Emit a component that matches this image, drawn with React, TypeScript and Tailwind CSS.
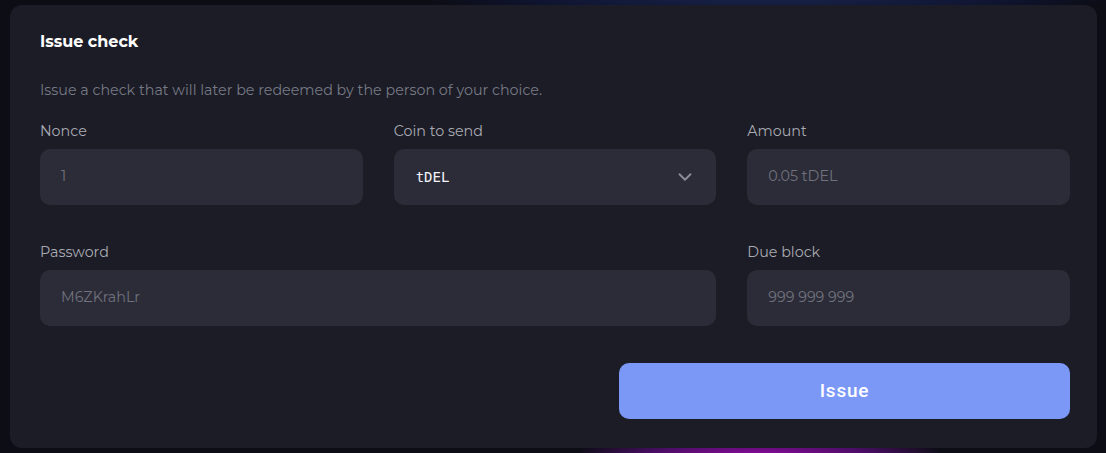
import { ChevronDown } from "lucide-react";

function Field({
  label,
  value,
  className = "",
}: {
  label: string;
  value: string;
  className?: string;
}) {
  return (
    <div className={`flex flex-col gap-[8px] ${className}`}>
      <label className="text-[14.3px] leading-[19px] text-[#a9abb3]">{label}</label>
      <div className="flex h-[56px] items-center rounded-[10px] bg-[#2c2c38] px-[21px] text-[14.3px] text-[#70727d]">
        {value}
      </div>
    </div>
  );
}

export default function App() {
  return (
    <main
      className="relative min-h-screen w-full overflow-hidden bg-[#0c0d15] pb-[5px] pl-[10px] pr-[9px] pt-[5px]"
      style={{ fontFamily: "Montserrat, 'Open Sans', 'Noto Sans', sans-serif" }}
    >
      {/* background glows */}
      <div className="absolute left-[430px] top-[-60px] h-[90px] w-[680px] rounded-full bg-[radial-gradient(ellipse_at_center,#1c2a55_0%,#0f1430_55%,transparent_75%)]" />
      <div className="absolute bottom-[-30px] left-[580px] h-[50px] w-[360px] rounded-full bg-[radial-gradient(ellipse_at_center,#9a0aa8_0%,#4a0d65_45%,transparent_75%)]" />

      <section className="relative flex flex-col rounded-[12px] bg-[#1c1c26] pb-[29px] pl-[30px] pr-[27px] pt-[27px]">
        <h1 className="text-[16px] font-bold leading-[20px] text-white">Issue check</h1>
        <p className="mt-[29px] text-[14.3px] leading-[19px] text-[#767a85]">
          Issue a check that will later be redeemed by the person of your choice.
        </p>

        <div className="mt-[22px] grid grid-cols-3 gap-x-[31px] gap-y-[38px]">
          <Field label="Nonce" value="1" />
          <div className="flex flex-col gap-[8px]">
            <label className="text-[14.3px] leading-[19px] text-[#a9abb3]">Coin to send</label>
            <div className="flex h-[56px] items-center justify-between rounded-[10px] bg-[#2c2c38] pl-[22px] pr-[20px]">
              <span
                className="text-[14px] font-normal text-[#f2f4fa]"
                style={{ fontFamily: "'DejaVu Sans Mono', monospace" }}
              >
                tDEL
              </span>
              <ChevronDown className="h-[22px] w-[22px] text-[#8c8e98]" strokeWidth={2} />
            </div>
          </div>
          <Field label="Amount" value="0.05 tDEL" />
          <Field label="Password" value="M6ZKrahLr" className="col-span-2" />
          <Field label="Due block" value="999 999 999" />
        </div>

        <div className="mt-[37px] flex justify-end">
          <button
            className="h-[56px] w-[451px] rounded-[10px] bg-[#7b98f7] text-[19px] font-medium tracking-[0.8px] text-white"
            style={{ fontFamily: "Roboto, sans-serif" }}
          >
            Issue
          </button>
        </div>
      </section>
    </main>
  );
}
